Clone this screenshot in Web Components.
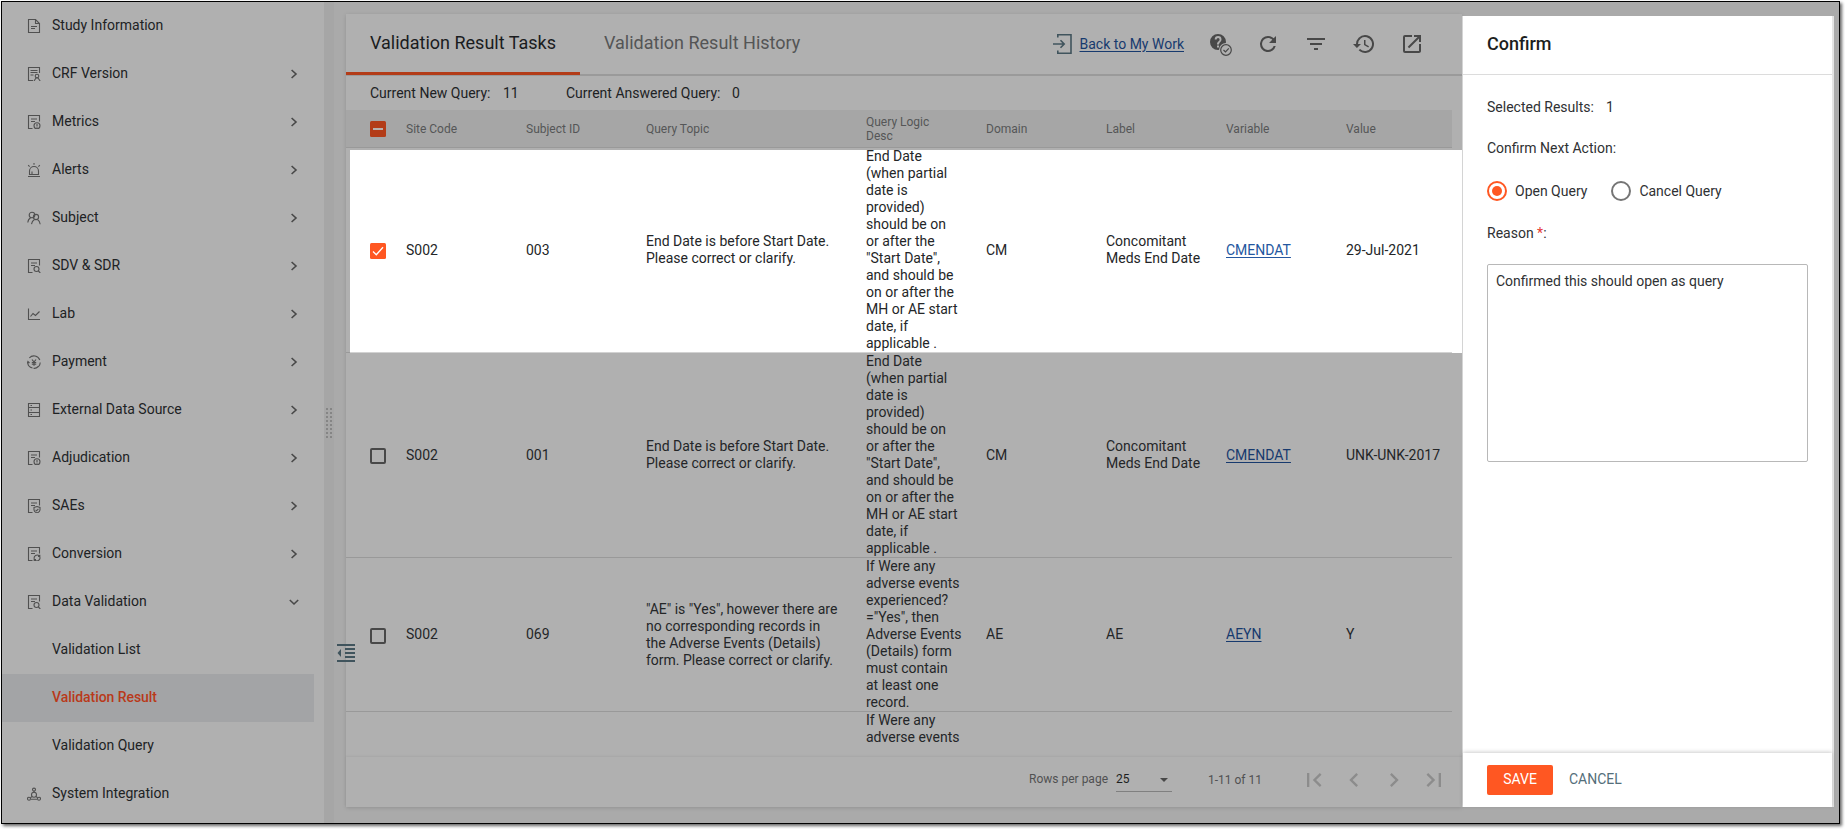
<!DOCTYPE html>
<html lang="en">
<head>
<meta charset="utf-8">
<title>Validation Result</title>
<style>
html,body{margin:0;padding:0;background:#fff}
body{width:1845px;height:829px;overflow:hidden;font-family:Roboto,"Liberation Sans",sans-serif;font-size:14px;color:#202224;padding:1px 0 0 1px;box-sizing:border-box}
</style>
</head>
<body>
<app-frame>
  <side-nav slot="nav">
    <nav-item icon="doc">Study Information</nav-item>
    <nav-item icon="crf" arrow="right">CRF Version</nav-item>
    <nav-item icon="alertdoc" arrow="right">Metrics</nav-item>
    <nav-item icon="alarm" arrow="right">Alerts</nav-item>
    <nav-item icon="people" arrow="right">Subject</nav-item>
    <nav-item icon="search" arrow="right">SDV &amp; SDR</nav-item>
    <nav-item icon="chart" arrow="right">Lab</nav-item>
    <nav-item icon="yen" arrow="right">Payment</nav-item>
    <nav-item icon="server" arrow="right">External Data Source</nav-item>
    <nav-item icon="alertdoc" arrow="right">Adjudication</nav-item>
    <nav-item icon="shield" arrow="right">SAEs</nav-item>
    <nav-item icon="convert" arrow="right">Conversion</nav-item>
    <nav-item icon="search" arrow="down">Data Validation</nav-item>
    <nav-item>Validation List</nav-item>
    <nav-item selected>Validation Result</nav-item>
    <nav-item>Validation Query</nav-item>
    <nav-item icon="nodes">System Integration</nav-item>
  </side-nav>
  <split-bar slot="split"></split-bar>
  <result-card slot="card">
    <tab-bar slot="tabs">
      <tab-label active>Validation Result Tasks</tab-label>
      <tab-label>Validation Result History</tab-label>
      <tool-strip slot="tools">Back to My Work</tool-strip>
    </tab-bar>
    <query-stats slot="stats"></query-stats>
    <data-table slot="table"></data-table>
    <table-pager slot="pager"></table-pager>
  </result-card>
  <confirm-drawer slot="drawer">
    <span slot="title">Confirm</span>
    <radio-option slot="options" checked>Open Query</radio-option>
    <radio-option slot="options">Cancel Query</radio-option>
    <span slot="reason">Confirmed this should open as query</span>
    <action-button slot="actions" primary>SAVE</action-button>
    <action-button slot="actions">CANCEL</action-button>
  </confirm-drawer>
</app-frame>
<script>
function define(name, render) {
  customElements.define(name, class extends HTMLElement {
    constructor() { super(); this.attachShadow({ mode: 'open' }); }
    connectedCallback() {
      this.shadowRoot.innerHTML = '<style>*{box-sizing:border-box}:host{box-sizing:border-box}svg{display:block}</style>' + render(this);
    }
  });
}

define('app-frame', () => `
<style>
:host{display:flex;width:1839px;height:823px;border:1px solid #000;background:#aaa;box-shadow:2px 2px 3px rgba(0,0,0,.6);position:relative}
::slotted(side-nav){flex:0 0 322px}
::slotted(split-bar){flex:0 0 10px}
::slotted(result-card){flex:0 0 1116px;margin:12px 0 16px 12px}
::slotted(confirm-drawer){flex:0 0 372px;margin:14px 0 16px}
.collapse{position:absolute;left:335px;top:642px}
</style>
<slot name="nav"></slot><slot name="split"></slot><slot name="card"></slot><slot name="drawer"></slot>
<svg class="collapse" width="18" height="18" viewBox="0 0 18 18" fill="#40545d"><path d="M0 0h18v2H0zM8 4h10v2H8zM8 8h10v2H8zM8 12h10v2H8zM0 16h18v2H0zM4 5v8L0.500 9z"/></svg>`);

define('side-nav', () => `
<style>:host{display:flex;flex-direction:column;background:#b0b0b0;overflow:hidden;padding-right:10px}</style><slot></slot>`);

const page = 'M5.500 13.500H1.500V.500H12.500V6.500M4 4h6M4 6.500h4';
const icons = {
  doc: '<path d="M1.500 .500H8.500L12.500 4.500V13.500H1.500ZM8.500 .500V4.500H12.500M4 7.500H10M4 9.500H8"/>',
  crf: '<path d="M6 13.500H1.500V.500H12.500V6M3.500 3.500h7M3.500 5.500h7M3.500 8h3"/><circle cx="10" cy="9" r="1.800"/><path d="M7 14l2-3h2l2.200 3"/>',
  alertdoc: `<path d="${page}"/><circle cx="10" cy="10.800" r="3"/><path d="M10 9v2.400M10 12v.800"/>`,
  search: `<path d="${page}"/><circle cx="9.500" cy="10" r="2.500"/><path d="M11.400 12L13.300 14"/>`,
  shield: `<path d="${page}"/><path d="M10 7.500l3 1v2.500q-.300 2-3 3q-2.700-1-3-3V8.500zM8.600 10.800l1 1 1.800-2"/>`,
  convert: `<path d="${page}"/><path d="M7.300 12A3 3 0 0 1 12.300 9M12.800 10A3 3 0 0 1 7.800 13M12.800 7.800V9.400H11M7.200 14V12.600H9"/>`,
  alarm: '<path d="M2.500 11.500V8a4.500 4.500 0 0 1 9 0V11.500ZM1 13.500H13M7 0V1.800M1.200 2.200L2.600 3.600M12.800 2.200L11.400 3.600M5 8.500V11"/>',
  people: '<circle cx="5" cy="4" r="2.800"/><circle cx="9" cy="6" r="2.600"/><path d="M.800 11.500Q1.200 8 3.500 7M4.500 13.200Q5 9.800 7.500 8.500M10.500 8.500Q12.800 10 13.200 13.200"/>',
  chart: '<path d="M1.500 1.500V12.500H13M3.500 9.500L6 6.500L8.500 8.500L12.500 4.500"/>',
  yen: '<path d="M2.300 3A6.200 6.200 0 0 1 12.800 5M13.200 7.500A6.200 6.200 0 0 1 9 13M.800 6.500A6.200 6.200 0 0 0 5.500 13M.300 8.500L.900 6.500L2.500 8M11.300 11.500Q9 13.800 6.500 13.300"/><path d="M5 4.500L7 7L9 4.500M7 7V10.800M4.800 7.500H9.200M4.800 9.200H9.200" stroke-width="1.200"/>',
  server: '<path d="M1.500 .500H12.500V13.500H1.500ZM1.500 4.500H12.500M1.500 9.500H12.500M3.500 2.500H5M3.500 7H5M3.500 11.500H5"/>',
  nodes: '<circle cx="7" cy="2.600" r="1.500"/><circle cx="7" cy="7.800" r="2.500"/><circle cx="2" cy="11.700" r="1.500"/><circle cx="12" cy="11.700" r="1.500"/><path d="M7 4V5.300M5 9.500L3.300 10.900M9 9.500L10.700 10.900M4 12.200H10"/>'
};
define('nav-item', el => {
  const icon = el.getAttribute('icon'), arrow = el.getAttribute('arrow'), sel = el.hasAttribute('selected');
  return `
<style>
:host{display:grid;grid-template-columns:14px 1fr 10px;column-gap:11px;align-items:center;height:48px;flex:none;padding:0 15px 2px 25px;
${sel ? 'background:#a3a4a6;color:#b9391a;font-weight:500;letter-spacing:-.05px;' : ''}}
.ic{padding-top:2px}.ar{padding-top:2px}
</style>
<div class="ic">${icon ? `<svg width="14" height="14" viewBox="0 0 14 14" fill="none" stroke="#505050" stroke-width="1.100">${icons[icon]}</svg>` : ''}</div>
<span><slot></slot></span>
<div class="ar">${arrow ? `<svg width="10" height="10" viewBox="0 0 10 10" fill="none" stroke="#484848" stroke-width="1.600">${arrow === 'right' ? '<path d="M2.600 1L7 5L2.600 9"/>' : '<path d="M.800 3L5 7L9.200 3"/>'}</svg>` : ''}</div>`;
});

define('split-bar', () => `
<style>
:host{display:flex;align-items:center;justify-content:center;background:#a6a6a6;padding-top:21px}
.grip{display:grid;grid-template-columns:2px 2px;gap:2px}
i{width:2px;height:2px;background:#858585}
</style><div class="grip">${'<i></i>'.repeat(16)}</div>`);

define('result-card', () => `
<style>
:host{display:flex;flex-direction:column;background:#b0b0b0;box-shadow:0 1px 4px rgba(0,0,0,.14)}
.body{flex:0 0 636px;overflow:hidden}
.gap{flex:0 0 11px}
</style>
<slot name="tabs"></slot><slot name="stats"></slot><div class="body"><slot name="table"></slot></div><div class="gap"></div><slot name="pager"></slot>`);

define('tab-bar', () => `
<style>
:host{display:flex;height:62px;flex:none;align-items:stretch;position:relative;background:linear-gradient(#9a9a9a,#9a9a9a) 0 100%/100% 2px no-repeat}
.sp{flex:1}
</style><slot></slot><span class="sp"></span><slot name="tools"></slot>`);

define('tab-label', el => {
  const a = el.hasAttribute('active');
  return `
<style>
:host{display:flex;align-items:center;height:61px;padding:0 24px 2px;font-size:18px;letter-spacing:0;white-space:nowrap;
${a ? 'width:234px;border-bottom:3px solid #b33c18;color:#1a1c1e;' : 'color:#545556;border-bottom:3px solid transparent;'}}
</style><slot></slot>`;
});

define('tool-strip', () => `
<style>
:host{display:flex;align-items:center;height:60px;padding-right:38px}
a{color:#173a6e;text-decoration:underline;text-underline-offset:1.500px;text-decoration-thickness:1px;margin:0 24px 0 8px;padding-bottom:1px;white-space:nowrap}
.i{margin-right:24px}
</style>
<svg width="19" height="20" viewBox="0 0 19 20" fill="none" stroke="#40545d" stroke-width="1.600"><path d="M4.800 3.500V.800H18V19.200H4.800V16.500M0 10H11M7.500 6.200L11.200 10L7.500 13.800"/></svg>
<a><slot></slot></a>
<svg class="i" width="24" height="24" viewBox="0 0 24 24"><path fill="#484848" fill-rule="evenodd" d="M10 2a8 8 0 1 0 0 16a8 8 0 0 0 8-8A8 8 0 0 0 10 2ZM9 13.500h2v2H9zM11 12.400H9c0-2.800 2.600-3 2.600-4.900A1.500 1.500 0 0 0 8.600 7.500H6.700a3.400 3.400 0 0 1 6.800 0c0 2.300-2.500 2.800-2.500 4.900Z"/><circle cx="18" cy="18" r="7" fill="#b0b0b0"/><g fill="none" stroke="#484848" stroke-width="1.200"><circle cx="18" cy="18" r="5.300"/><path d="M15.500 18l2 2 3.300-3.700"/></g></svg>
<svg class="i" width="24" height="24" viewBox="0 0 24 24" fill="#484848"><path d="M17.650 6.350A7.958 7.958 0 0 0 12 4a8 8 0 1 0 7.730 10h-2.080A5.990 5.990 0 0 1 12 18a6 6 0 1 1 0-12c1.660 0 3.140.690 4.220 1.780L13 11h7V4l-2.350 2.350z"/></svg>
<svg class="i" width="24" height="24" viewBox="0 0 24 24" fill="#484848"><path d="M10 18h4v-2h-4v2zM3 6v2h18V6H3zm3 7h12v-2H6v2z"/></svg>
<svg class="i" width="24" height="24" viewBox="0 0 24 24" fill="#484848"><path d="M13 3a9 9 0 0 0-9 9H1l3.890 3.890.070.140L9 12H6a7 7 0 1 1 2.060 4.940l-1.420 1.420A9 9 0 1 0 13 3zm-1 5v5l4.280 2.540.720-1.210-3.500-2.080V8H12z"/></svg>
<svg width="24" height="24" viewBox="0 0 24 24" fill="#484848"><path d="M19 19H5V5h7V3H5a2 2 0 0 0-2 2v14a2 2 0 0 0 2 2h14c1.100 0 2-.900 2-2v-7h-2v7zM14 3v2h3.590l-9.830 9.830 1.410 1.410L19 6.410V10h2V3h-7z"/></svg>`);

define('query-stats', () => `
<style>
:host{display:flex;height:34px;flex:none;align-items:center;padding:0 0 0 24px;white-space:nowrap}
b{font-weight:400}.k{width:133px}.v{width:63px}.k2{width:166px}
</style><b class="k">Current New Query:</b><b class="v">11</b><b class="k2">Current Answered Query:</b><b>0</b>`);

define('check-box', el => {
  const s = el.getAttribute('state'), dim = el.hasAttribute('dim');
  const body = s === 'off'
    ? '<rect x="1" y="1" width="14" height="14" rx="1" fill="none" stroke="#484848" stroke-width="2"/>'
    : `<rect width="16" height="16" rx="1.500" fill="${dim ? '#b33c18' : '#ff5722'}"/><path fill="none" stroke="${dim ? '#b8b0ad' : '#fff'}" ${s === 'on' ? 'stroke-width="1.300" d="M3 8.500L6.300 11.700L13 4.300"' : 'stroke-width="2" d="M3 8H13"'}/>`;
  return `<style>:host{display:block;width:16px;height:16px}</style><svg width="16" height="16" viewBox="0 0 16 16">${body}</svg>`;
});

const GRID = 'grid-template-columns:36px 120px 120px 220px 120px 120px 120px 120px 1fr';
define('table-row', el => {
  const hi = el.hasAttribute('lit');
  return `
<style>
:host{display:grid;${GRID};align-items:center;padding-left:24px;width:1106px;border-bottom:1px solid ${hi ? '#d2d2d2' : '#999'};line-height:17px;position:relative;color:#242628}
:host([partial]){border:0}
::slotted(*){white-space:pre;position:relative}
.lit{position:absolute;left:4px;top:2px;width:1112px;bottom:0;background:#fff}
.edge{position:absolute;left:0;bottom:-1px;width:4px;height:1px;background:#999}
.tail{position:absolute;left:1106px;bottom:-1px;width:10px;height:1px;background:#fff}
::slotted(check-box){top:1px}
::slotted(a){color:${hi ? '#2457a0' : '#173a6e'};text-decoration:underline;text-underline-offset:1.500px;text-decoration-thickness:1px;justify-self:start}
</style>${hi ? '<i class="lit"></i><i class="edge"></i><i class="tail"></i>' : ''}<slot></slot>`;
});

const endDate = 'End Date\n(when partial\ndate is\nprovided)\nshould be on\nor after the\n"Start Date",\nand should be\non or after the\nMH or AE start\ndate, if\napplicable .';
const adverse = 'If Were any\nadverse events\nexperienced?\n="Yes", then\nAdverse Events\n(Details) form\nmust contain\nat least one\nrecord.';
const clarify = 'End Date is before Start Date.\nPlease correct or clarify.';
const aeTopic = '"AE" is "Yes", however there are\nno corresponding records in\nthe Adverse Events (Details)\nform. Please correct or clarify.';
const rows = [
  ['on', 'S002', '003', clarify, endDate, 'CM', 'Concomitant\nMeds End Date', 'CMENDAT', '29-Jul-2021'],
  ['off', 'S002', '001', clarify, endDate, 'CM', 'Concomitant\nMeds End Date', 'CMENDAT', 'UNK-UNK-2017'],
  ['off', 'S002', '069', aeTopic, adverse, 'AE', 'AE', 'AEYN', 'Y']
];
define('data-table', () => `
<style>
:host{display:block}
.head{display:grid;${GRID};align-items:center;width:1106px;height:38px;padding-left:24px;background:#a6a6a6;border-bottom:1px solid #999;font-size:12px;line-height:14px;color:#555657}
.head span{white-space:pre}
</style>
<div class="head"><check-box state="some" dim></check-box>${['Site Code', 'Subject ID', 'Query Topic', 'Query Logic\nDesc', 'Domain', 'Label', 'Variable', 'Value'].map(t => `<span>${t}</span>`).join('')}</div>
${rows.map((r, i) => `<table-row ${i ? '' : 'lit'}>${r.map((c, j) => j === 0 ? `<check-box state="${c}"></check-box>` : j === 7 ? `<a>${c}</a>` : `<span>${c}</span>`).join('')}</table-row>`).join('')}
<table-row partial><span></span><span></span><span></span><span></span><span>If Were any\nadverse events</span></table-row>`);

define('table-pager', () => `
<style>
:host{display:flex;align-items:center;flex:1;padding:0 14px 4px 0;justify-content:flex-end;color:#505152;font-size:12px;box-shadow:0 -1px 2px rgba(0,0,0,.06)}
.sel{display:flex;align-items:center;justify-content:space-between;width:56px;height:26px;margin:0 36px 0 8px;border-bottom:1px solid #808080;color:#1c1e20;padding:0 4px 0 0;position:relative;top:-1px}
.lab{margin-top:-2px}
.range{margin-right:39px;width:53px;white-space:nowrap}
.nav{display:flex;gap:12px}
</style>
<span class="lab">Rows per page</span>
<div class="sel">25<svg width="8" height="4" viewBox="0 0 8 4" style="margin-top:3px"><path d="M0 0H8L4 4Z" fill="#484848"/></svg></div>
<span class="range">1-11 of 11</span>
<div class="nav">${['M18.410 16.590L13.820 12l4.590-4.590L17 6l-6 6 6 6zM6 6h2v12H6z', 'M15.410 7.410L14 6l-6 6 6 6 1.410-1.410L10.830 12z', 'M10 6L8.590 7.410 13.170 12l-4.580 4.590L10 18l6-6z', 'M5.590 7.410L10.180 12l-4.590 4.590L7 18l6-6-6-6zM16 6h2v12h-2z'].map(d => `<svg width="28" height="28" viewBox="0 0 24 24" fill="#8c8c8c"><path d="${d}"/></svg>`).join('')}</div>`);

define('radio-option', el => {
  const c = el.hasAttribute('checked'), col = c ? '#ff5722' : '#757575';
  return `<style>:host{display:flex;align-items:center;gap:8px;white-space:nowrap}</style>
<svg width="20" height="20" viewBox="0 0 20 20"><circle cx="10" cy="10" r="9" fill="none" stroke="${col}" stroke-width="2"/>${c ? '<circle cx="10" cy="10" r="5" fill="#ff5722"/>' : ''}</svg><slot></slot>`;
});

define('action-button', el => `<style>:host{display:flex;align-items:center;justify-content:center;height:30px;padding-bottom:2px;border-radius:2px;${el.hasAttribute('primary') ? 'width:66px;background:#ff5722;color:#fff' : 'color:#546e7a'}}</style><slot></slot>`);

define('confirm-drawer', () => `
<style>
:host{display:flex;flex-direction:column;background:#fff;border-left:1px solid #d4d4d4;border-right:2px solid #e4e4e4;color:#2f3133;position:relative}
header{height:59px;border-bottom:1px solid #dcdcdc;padding:0 24px 4px;display:flex;align-items:center;font-size:18px;font-weight:500;color:#1c1e20}
main{flex:1;padding:0 24px;display:flex;flex-direction:column}
p{margin:0;height:20px;line-height:20px}
.sel{margin-top:22px;display:flex}.sel span{width:119px}
.act{margin-top:21px}
.opts{margin-top:23px;height:20px;display:flex;gap:24px}
.why{margin-top:22px}.why b{font-weight:400;color:#e53935}
.box{margin-top:21px;width:321px;height:198px;border:1px solid #b8b8b8;border-radius:2px;padding:6px 8px;line-height:20px}
footer{height:54px;display:flex;align-items:center;gap:16px;padding:0 24px;box-shadow:0 -1px 4px rgba(0,0,0,.2)}
</style>
<header><slot name="title"></slot></header>
<main><p class="sel"><span>Selected Results:</span>1</p><p class="act">Confirm Next Action:</p>
<div class="opts"><slot name="options"></slot></div>
<p class="why">Reason <b>*</b>:</p><div class="box"><slot name="reason"></slot></div></main>
<footer><slot name="actions"></slot></footer>`);
</script>
</body>
</html>
